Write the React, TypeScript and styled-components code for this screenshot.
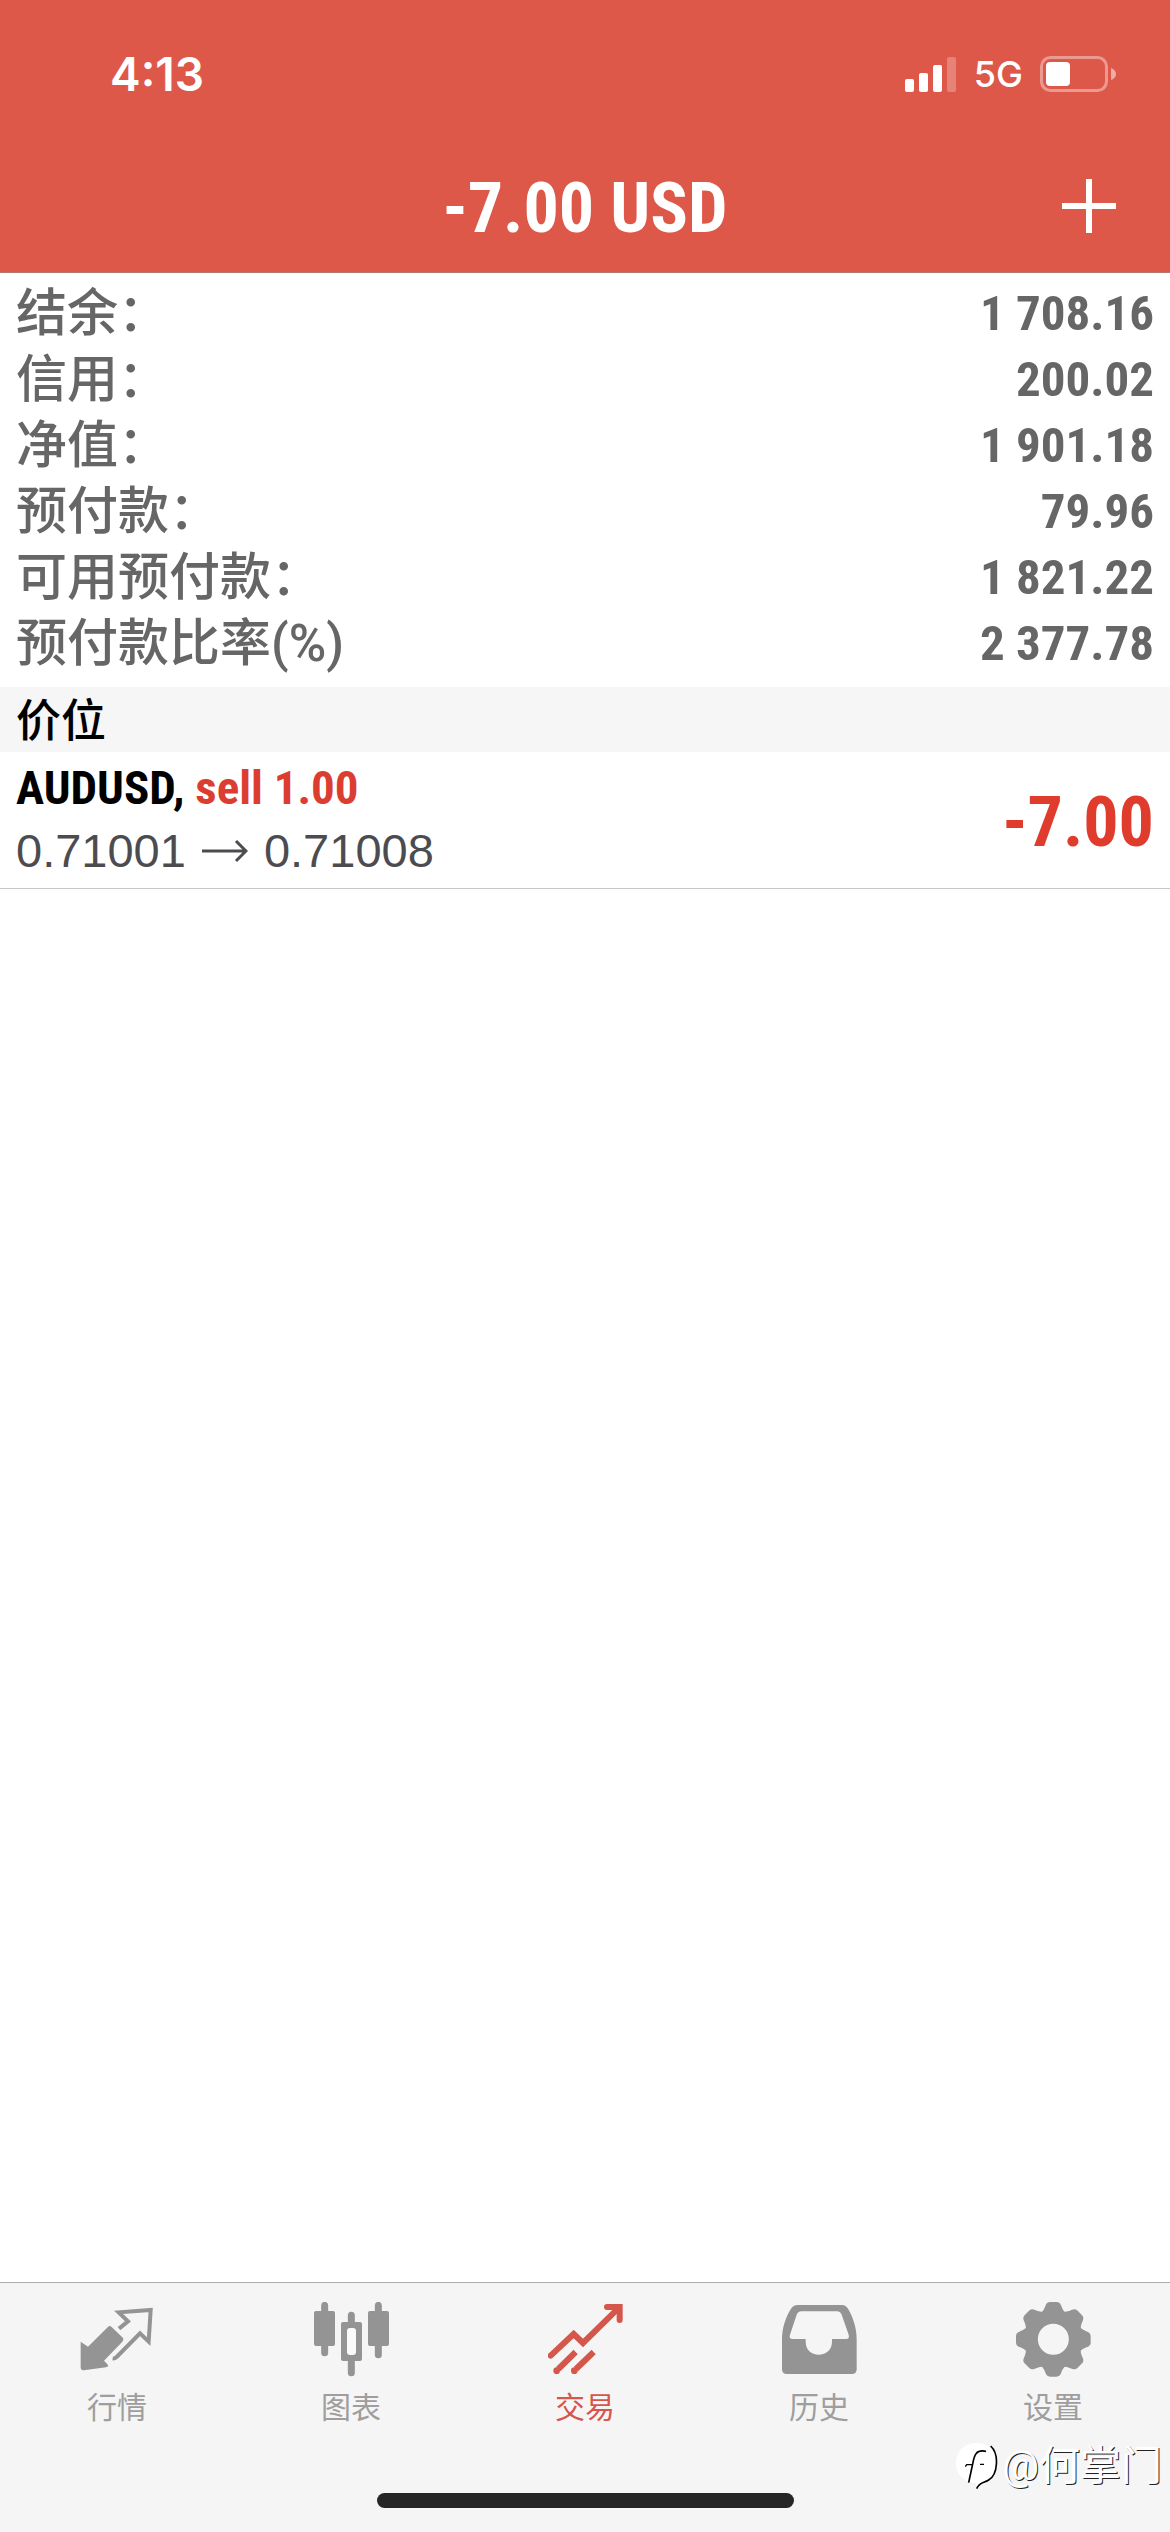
import React from 'react';
import styled, { createGlobalStyle } from 'styled-components';

const condensed = '"Roboto Condensed", "Arial Narrow", Roboto, sans-serif';
const chinese = 'Roboto, "Noto Sans CJK SC", sans-serif';

const GlobalStyle = createGlobalStyle`
  *, *::before, *::after { box-sizing: border-box; }
  body { margin: 0; background: #fff; font-family: ${chinese}; }
  h1, h2, p, dl, dt, dd, ul { margin: 0; padding: 0; }
  ul { list-style: none; }
`;

const Screen = styled.div`
  display: flex;
  flex-direction: column;
  min-height: 100vh;
`;

const Header = styled.header`
  background: #de5849;
  color: #fff;
  border-bottom: 1px solid #b3776f;
`;

const StatusBar = styled.div`
  display: flex;
  align-items: center;
  justify-content: space-between;
  height: 140px;
  padding: 8px 54px 0 110px;
`;

const Clock = styled.time`
  font: 600 46px/56px Inter, sans-serif;
`;

const StatusIcons = styled.div`
  display: flex;
  align-items: center;
  gap: 17px;
`;

const Network = styled.span`
  font: 500 36px/40px Inter, sans-serif;
`;

const NavBar = styled.div`
  display: grid;
  grid-template-columns: 1fr auto 1fr;
  align-items: center;
  height: 132px;
  padding: 0 54px;
`;

const Title = styled.h1`
  grid-column: 2;
  padding-top: 4px;
  font: 700 70px/84px ${condensed};
`;

const AddButton = styled.button`
  justify-self: end;
  display: flex;
  padding: 0;
  border: 0;
  background: none;
  color: inherit;
`;

const Main = styled.main`
  flex: 1;
`;

const Summary = styled.dl`
  padding: 8px 16px 10px;
  color: #666;
`;

const SummaryRow = styled.div`
  display: flex;
  align-items: center;
  justify-content: space-between;
  height: 66px;
`;

const SummaryLabel = styled.dt`
  font: 500 51px/66px ${chinese};
`;

const SummaryValue = styled.dd`
  font: 700 49px/66px ${condensed};
`;

const SectionTitle = styled.h2`
  padding: 4px 16px 0;
  background: #f6f6f6;
  color: #000;
  font: 500 45px/61px ${chinese};
`;

const Position = styled.li`
  display: flex;
  align-items: center;
  justify-content: space-between;
  padding: 4px 16px 6px;
  border-bottom: 1px solid #c6c6c8;
`;

const Deal = styled.p`
  color: #000;
  font: 700 47px/63px ${condensed};
`;

const Side = styled.span`
  color: #dc3d31;
`;

const Prices = styled.p`
  display: flex;
  align-items: center;
  gap: 16px;
  color: #4c4c50;
  font: 400 47px/63px "Liberation Sans", sans-serif;
`;

const Profit = styled.strong`
  padding-top: 6px;
  color: #e03c2d;
  font: 700 70px/84px ${condensed};
`;

const Footer = styled.footer`
  position: relative;
  display: flex;
  flex-direction: column;
  align-items: center;
  border-top: 1px solid #adadad;
  background: #f5f5f5;
`;

const Tabs = styled.nav`
  display: grid;
  grid-template-columns: repeat(5, 1fr);
  width: 100%;
`;

const Tab = styled.a<{ $active?: boolean }>`
  display: flex;
  flex-direction: column;
  align-items: center;
  gap: 9px;
  padding-top: 19px;
  color: ${(p) => (p.$active ? '#d5564b' : '#949494')};
  text-decoration: none;
`;

const TabLabel = styled.span<{ $active?: boolean }>`
  color: ${(p) => (p.$active ? 'inherit' : '#9e9e9e')};
  font: 400 30px/44px ${chinese};
`;

const HomeIndicator = styled.div`
  width: 417px;
  max-width: 40%;
  height: 15px;
  margin: 63px 0 24px;
  border-radius: 8px;
  background: #262626;
`;

const Watermark = styled.div`
  position: absolute;
  right: 8px;
  bottom: 36px;
  display: flex;
  align-items: center;
  gap: 4px;
  color: #fff;
  font: 400 41px/60px ${chinese};
  text-shadow: 1px 1px 0 #222;
`;

const Signal = () => (
  <svg width="52" height="35" viewBox="0 0 52 35" fill="#fff" aria-hidden="true">
    <rect x="0" y="22" width="9" height="13" rx="2" />
    <rect x="14" y="16" width="9" height="19" rx="2" />
    <rect x="28" y="8" width="9" height="27" rx="2" />
    <rect x="42" y="0" width="9" height="35" rx="2" opacity="0.25" />
  </svg>
);

const Battery = () => (
  <svg width="76" height="36" viewBox="0 0 76 36" aria-hidden="true">
    <rect x="1.5" y="1.5" width="65" height="33" rx="9" fill="none" stroke="#fff" strokeOpacity="0.4" strokeWidth="3" />
    <rect x="6" y="6" width="24" height="24" rx="4" fill="#fff" />
    <path d="M71 12q5 2 5 6t-5 6z" fill="#fff" fillOpacity="0.5" />
  </svg>
);

const Plus = () => (
  <svg width="54" height="54" viewBox="0 0 54 54" stroke="#fff" strokeWidth="6" aria-hidden="true">
    <path d="M27 0v54M0 27h54" />
  </svg>
);

const Arrow = () => (
  <svg width="46" height="24" viewBox="0 0 46 24" fill="none" stroke="currentColor" strokeWidth="3" role="img" aria-label="→">
    <path d="M0 12h44M34 2l10 10l-10 10" />
  </svg>
);

const TabIcon = ({ children }: { children: React.ReactNode }) => (
  <svg width="75" height="75" viewBox="0 0 225 225" fill="currentColor" aria-hidden="true">
    {children}
  </svg>
);

const QuotesIcon = () => (
  <TabIcon>
    <path d="M2 119 24 134 83 76Q89 69 95 75L127 106Q133 112 127 119L72 176 82 187Q88 194 78 196L12 205Q2 206 2 196Z" />
    <path
      d="M117 80 144 58 116 31 212 24 206 119 180 94 110 165Q104 170 98 169"
      fill="none"
      stroke="currentColor"
      strokeWidth="12"
    />
  </TabIcon>
);

const ChartIcon = () => (
  <TabIcon>
    <path d="M32 10V152M193 10V158M112 40V70M112 170V212" stroke="currentColor" strokeWidth="21" strokeLinecap="round" />
    <rect x="0" y="27" width="63" height="105" rx="6" />
    <rect x="162" y="27" width="63" height="105" rx="6" />
    <rect x="81" y="60" width="63" height="117" rx="6" />
    <rect x="99" y="78" width="27" height="81" rx="9" fill="#fafafa" />
  </TabIcon>
);

const TradeIcon = () => (
  <TabIcon>
    <g fill="none" stroke="currentColor" strokeWidth="18">
      <path d="M8 161 77 96 105 123 213 17" strokeLinecap="round" />
      <path d="M177 15H215V54" strokeLinecap="round" />
      <path d="M31 201 83 150M84 201 137 150" />
    </g>
    <circle cx="26" cy="206" r="10" />
    <circle cx="79" cy="206" r="10" />
  </TabIcon>
);

const HistoryIcon = () => (
  <TabIcon>
    <path
      fillRule="evenodd"
      d="M48 9H180Q192 9 199 22C214 48 224 80 224 112V202Q224 216 210 216H14Q0 216 0 202V112C0 80 10 48 26 22Q33 9 48 9ZM58 28Q49 28 44 38L24 98Q20 111 32 111H71V118C71 145 88 158 110 158C132 158 150 145 150 118V111H193Q203 111 200 98L179 38Q174 28 165 28Z"
    />
  </TabIcon>
);

const SettingsIcon = () => (
  <TabIcon>
    <circle cx="112" cy="112" r="66" fill="none" stroke="currentColor" strokeWidth="39" />
    {[0, 45, 90, 135, 180, 225, 270, 315].map((angle) => (
      <path
        key={angle}
        transform={`rotate(${angle} 112 112)`}
        d="M70 38C80 28 84 24 89 10Q93 0 102 0H122Q131 0 135 10C140 24 144 28 154 38Z"
      />
    ))}
  </TabIcon>
);

const WatermarkLogo = () => (
  <svg width="42" height="48" viewBox="0 0 126 144" fill="none" aria-hidden="true">
    <path d="M62 3C98 3 124 28 124 64C124 100 100 118 62 140L60 124C24 122 0 98 0 64C0 28 26 3 62 3Z" fill="#fff" />
    <g stroke="#000">
      <path d="M90 28C60 22 55 38 50 66L38 122" strokeWidth="5" />
      <path d="M28 74 32 68H50M72 67H84" strokeWidth="4" />
      <path d="M104 12C130 36 126 98 98 114C82 124 70 120 62 140" strokeWidth="5" />
    </g>
  </svg>
);

const summary = [
  { label: '结余：', value: '1 708.16' },
  { label: '信用：', value: '200.02' },
  { label: '净值：', value: '1 901.18' },
  { label: '预付款：', value: '79.96' },
  { label: '可用预付款：', value: '1 821.22' },
  { label: '预付款比率(%)', value: '2 377.78' },
];

const tabs = [
  { label: '行情', Icon: QuotesIcon },
  { label: '图表', Icon: ChartIcon },
  { label: '交易', Icon: TradeIcon, active: true },
  { label: '历史', Icon: HistoryIcon },
  { label: '设置', Icon: SettingsIcon },
];

export default function App() {
  return (
    <Screen lang="zh-CN">
      <GlobalStyle />
      <Header>
        <StatusBar>
          <Clock>4:13</Clock>
          <StatusIcons>
            <Signal />
            <Network>5G</Network>
            <Battery />
          </StatusIcons>
        </StatusBar>
        <NavBar>
          <Title>-7.00 USD</Title>
          <AddButton type="button" aria-label="+">
            <Plus />
          </AddButton>
        </NavBar>
      </Header>
      <Main>
        <Summary>
          {summary.map(({ label, value }) => (
            <SummaryRow key={label}>
              <SummaryLabel>{label}</SummaryLabel>
              <SummaryValue>{value}</SummaryValue>
            </SummaryRow>
          ))}
        </Summary>
        <SectionTitle>价位</SectionTitle>
        <ul>
          <Position>
            <div>
              <Deal>
                AUDUSD, <Side>sell 1.00</Side>
              </Deal>
              <Prices>
                <span>0.71001</span>
                <Arrow />
                <span>0.71008</span>
              </Prices>
            </div>
            <Profit>-7.00</Profit>
          </Position>
        </ul>
      </Main>
      <Footer>
        <Tabs>
          {tabs.map(({ label, Icon, active }) => (
            <Tab key={label} href="#" $active={active} aria-current={active ? 'page' : undefined}>
              <Icon />
              <TabLabel $active={active}>{label}</TabLabel>
            </Tab>
          ))}
        </Tabs>
        <HomeIndicator />
        <Watermark>
          <WatermarkLogo />
          <span>@何掌门</span>
        </Watermark>
      </Footer>
    </Screen>
  );
}
